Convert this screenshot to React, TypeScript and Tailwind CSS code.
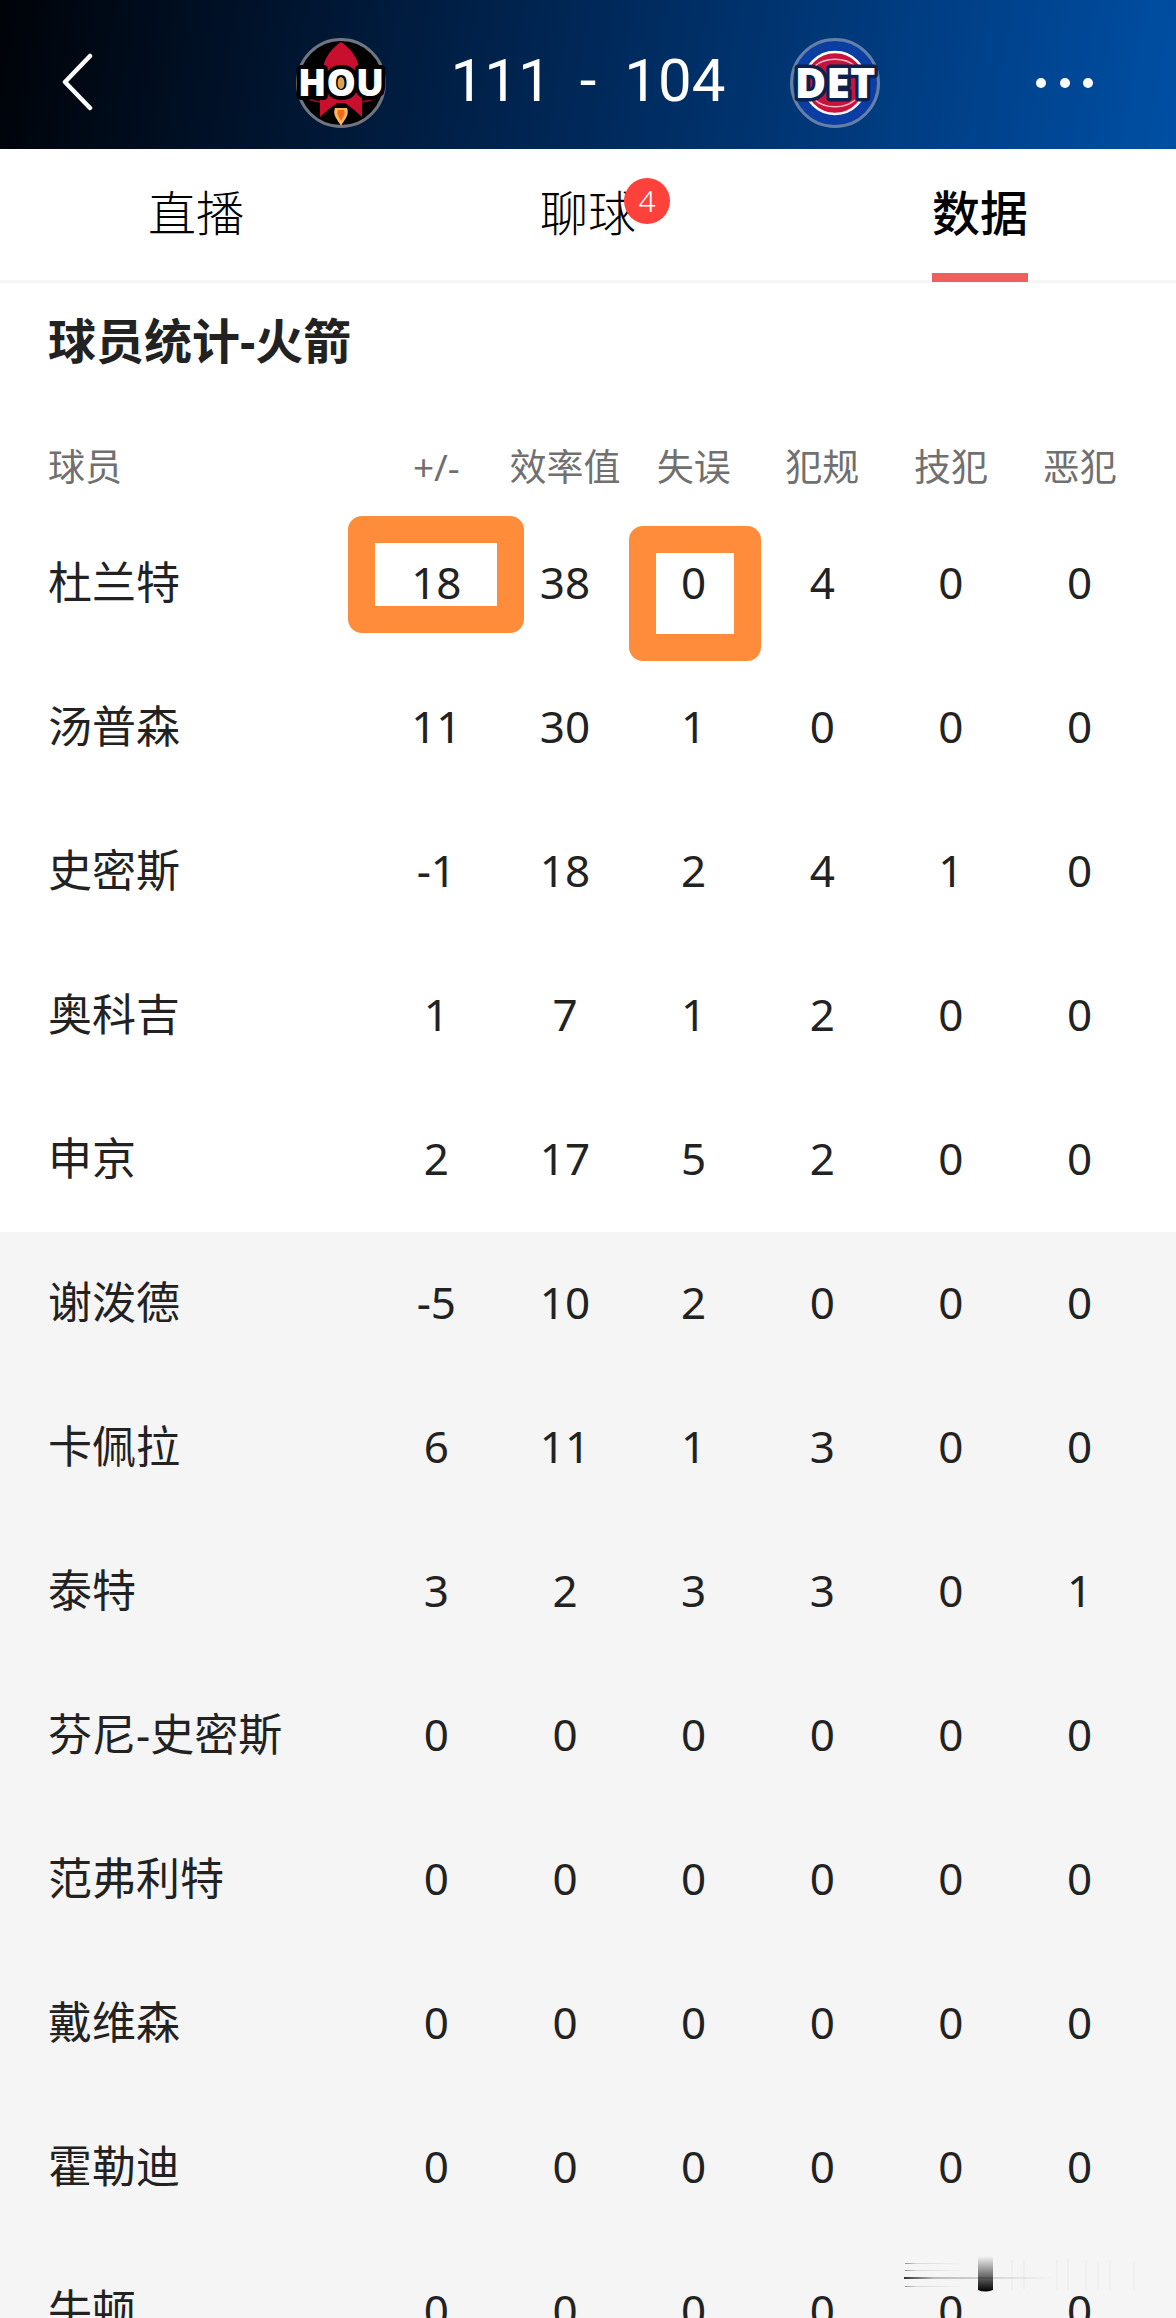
import React from "react";

type Player = { name: string; stats: number[] };

const COLUMNS = ["+/-", "效率值", "失误", "犯规", "技犯", "恶犯"];

const STARTERS: Player[] = [
  { name: "杜兰特", stats: [18, 38, 0, 4, 0, 0] },
  { name: "汤普森", stats: [11, 30, 1, 0, 0, 0] },
  { name: "史密斯", stats: [-1, 18, 2, 4, 1, 0] },
  { name: "奥科吉", stats: [1, 7, 1, 2, 0, 0] },
  { name: "申京", stats: [2, 17, 5, 2, 0, 0] },
];

const BENCH: Player[] = [
  { name: "谢泼德", stats: [-5, 10, 2, 0, 0, 0] },
  { name: "卡佩拉", stats: [6, 11, 1, 3, 0, 0] },
  { name: "泰特", stats: [3, 2, 3, 3, 0, 1] },
  { name: "芬尼-史密斯", stats: [0, 0, 0, 0, 0, 0] },
  { name: "范弗利特", stats: [0, 0, 0, 0, 0, 0] },
  { name: "戴维森", stats: [0, 0, 0, 0, 0, 0] },
  { name: "霍勒迪", stats: [0, 0, 0, 0, 0, 0] },
  { name: "牛顿", stats: [0, 0, 0, 0, 0, 0] },
];

// Highlight frames, keyed by "player:column index".
const MARKS: Record<string, string> = {
  "杜兰特:0": "-left-6 top-1 h-[117px] w-44",
  "杜兰特:2": "left-0 top-[14px] h-[135px] w-[132px]",
};

function RocketsLogo() {
  return (
    <svg viewBox="0 0 96 96" className="size-24" role="img" aria-label="HOU">
      <circle cx="48" cy="48" r="43.5" fill="#000" stroke="#6f7680" strokeWidth="3" />
      <path d="M48 7C58 14 67 24 67 42V62H29V42C29 24 38 14 48 7Z" fill="#c8102e" />
      <path d="M5 58C16 66 26 68 40 67M91 58C80 66 70 68 56 67" fill="none" stroke="#8c0e24" strokeWidth="2" />
      <path d="M27 60H69V82L60 74L52 68H44L36 74L27 82Z" fill="#c8102e" />
      <path d="M40 72Q48 66 56 72L53 75H43Z" fill="#000" />
      <path d="M42 73H54C57 80 51 85 48 91C45 85 39 80 42 73Z" fill="#fdb85a" />
      <path d="M45 75H51C53 79 50 82 48 86C46 82 43 79 45 75Z" fill="#f26a21" />
      <text x="48" y="61" textAnchor="middle" fontSize="37" fontWeight="800" fill="#fff" stroke="#000" strokeWidth="8" strokeLinejoin="round" paintOrder="stroke" fontFamily="'Open Sans', 'Noto Sans', sans-serif">HOU</text>
      <ellipse cx="48" cy="48" rx="3.5" ry="6" fill="#d9a54c" />
    </svg>
  );
}

function PistonsLogo() {
  return (
    <svg viewBox="0 0 96 96" className="size-24" role="img" aria-label="DET">
      <circle cx="48" cy="48" r="43.5" fill="#0a3ea3" stroke="#6480a8" strokeWidth="3" />
      <circle cx="48" cy="48" r="31" fill="#c8143c" stroke="#fff" strokeWidth="2.5" />
      <path d="M28 31C38 22 58 22 68 31M28 65C38 74 58 74 68 65" fill="none" stroke="#f3b8c6" strokeWidth="1.5" />
      <text x="48" y="63" textAnchor="middle" fontSize="43" fontWeight="800" fill="#fff" stroke="#0b2150" strokeWidth="7" strokeLinejoin="round" paintOrder="stroke" fontFamily="'Open Sans', 'Noto Sans', sans-serif">DET</text>
    </svg>
  );
}

function Header() {
  return (
    <header className="flex h-[149px] shrink-0 items-center justify-between bg-[linear-gradient(100deg,#000308_0%,#001530_25%,#002a5c_52%,#003c80_75%,#004fa4_100%)] pt-4 text-white">
      <button type="button" aria-label="返回" className="ml-[60px] flex w-20 items-center">
        <svg viewBox="0 0 36 60" className="h-[60px] w-9" fill="none" stroke="currentColor" strokeWidth="4.5" strokeLinecap="round" strokeLinejoin="round">
          <path d="M30 3L5 29L30 55" />
        </svg>
      </button>
      <div className="flex items-center">
        <RocketsLogo />
        <div className="flex w-[398px] justify-center gap-7 pb-1 font-[Roboto,'Noto_Sans',sans-serif] text-[60px] leading-[72px]">
          <span>111</span>
          <span>-</span>
          <span>104</span>
        </div>
        <PistonsLogo />
      </div>
      <button type="button" aria-label="更多" className="mr-[83px] flex w-[57px] justify-between">
        <span className="size-2.5 rounded-full bg-white" />
        <span className="size-2.5 rounded-full bg-white" />
        <span className="size-2.5 rounded-full bg-white" />
      </button>
    </header>
  );
}

function Tabs() {
  return (
    <nav className="grid h-[134px] shrink-0 grid-cols-3 border-b-3 border-[#f5f5f5] text-[48px] leading-[128px] text-black">
      <button type="button" className="pb-1 font-light">直播</button>
      <button type="button" className="pb-1 font-light">
        <span className="relative">
          聊球
          <span className="absolute -top-0.5 left-[84px] flex size-[46px] items-center justify-center rounded-full bg-[#ff413b] text-[30px] leading-none text-white">
            4
          </span>
        </span>
      </button>
      <button type="button" aria-current="page" className="relative pb-1 font-medium">
        数据
        <span className="absolute -bottom-px left-1/2 h-[9px] w-24 -translate-x-1/2 bg-[#ee5f5f]" />
      </button>
    </nav>
  );
}

function Row({ player }: { player: Player }) {
  return (
    <tr className="h-36">
      <th scope="row" className="pb-1 pl-12 text-left font-normal whitespace-nowrap">{player.name}</th>
      {player.stats.map((value, i) => {
        const mark = MARKS[`${player.name}:${i}`];
        return (
          <td key={i} className="relative pb-1 text-center">
            {value}
            {mark && <span className={`absolute rounded-[14px] border-27 border-[#ff8c3a] ${mark}`} />}
          </td>
        );
      })}
      <td />
    </tr>
  );
}

function Watermark() {
  return (
    <svg viewBox="0 0 250 40" className="pointer-events-none absolute right-6 bottom-[22px] h-10 w-[250px]" aria-hidden="true">
      <defs>
        <linearGradient id="wm-bar" x1="0" y1="0" x2="0" y2="1">
          <stop offset="0" stopColor="#000" stopOpacity="0" />
          <stop offset="0.5" stopColor="#000" stopOpacity="0.5" />
          <stop offset="1" stopColor="#000" />
        </linearGradient>
        <linearGradient id="wm-line" x1="0" y1="0" x2="1" y2="0">
          <stop offset="0" stopColor="#000" />
          <stop offset="0.2" stopColor="#000" stopOpacity="0.3" />
          <stop offset="1" stopColor="#000" stopOpacity="0" />
        </linearGradient>
      </defs>
      <rect x="3" y="7" width="60" height="1" fill="url(#wm-line)" opacity="0.4" />
      <rect x="3" y="14" width="60" height="1" fill="url(#wm-line)" opacity="0.4" />
      <rect x="2" y="21" width="150" height="2" fill="url(#wm-line)" opacity="0.8" />
      <rect x="3" y="30" width="60" height="1" fill="url(#wm-line)" opacity="0.4" />
      <path d="M110 4V34M122 4V34M155 4V34M166 2V34M184 4V34M196 6V34M208 4V34M232 6V34" stroke="#000" strokeOpacity="0.02" strokeWidth="2" />
      <path d="M76 0H91V34Q83 37 76 34Z" fill="url(#wm-bar)" />
    </svg>
  );
}

export default function App() {
  return (
    <div className="relative flex h-screen flex-col overflow-hidden bg-white font-['Noto_Sans','Noto_Sans_CJK_SC',sans-serif] text-[#222]">
      <Header />
      <Tabs />
      <main className="min-h-0 flex-1 overflow-y-auto pt-7 [scrollbar-width:none]">
        <h1 className="pl-12 text-[48px] leading-[60px] font-bold">球员统计-火箭</h1>
        <table className="mt-[51px] w-full table-fixed border-collapse text-[44px] leading-[60px]">
          <colgroup>
            <col className="w-[372px]" />
            <col span={6} />
            <col className="w-8" />
          </colgroup>
          <thead className="text-[37px] text-[#707070]">
            <tr className="h-[90px]">
              <th scope="col" className="pl-12 text-left font-normal">球员</th>
              {COLUMNS.map((label) => (
                <th key={label} scope="col" className="font-normal whitespace-nowrap">{label}</th>
              ))}
              <td />
            </tr>
          </thead>
          <tbody>
            {STARTERS.map((p) => <Row key={p.name} player={p} />)}
          </tbody>
          <tbody className="bg-[#f5f5f5]">
            {BENCH.map((p) => <Row key={p.name} player={p} />)}
          </tbody>
        </table>
      </main>
      <Watermark />
    </div>
  );
}
